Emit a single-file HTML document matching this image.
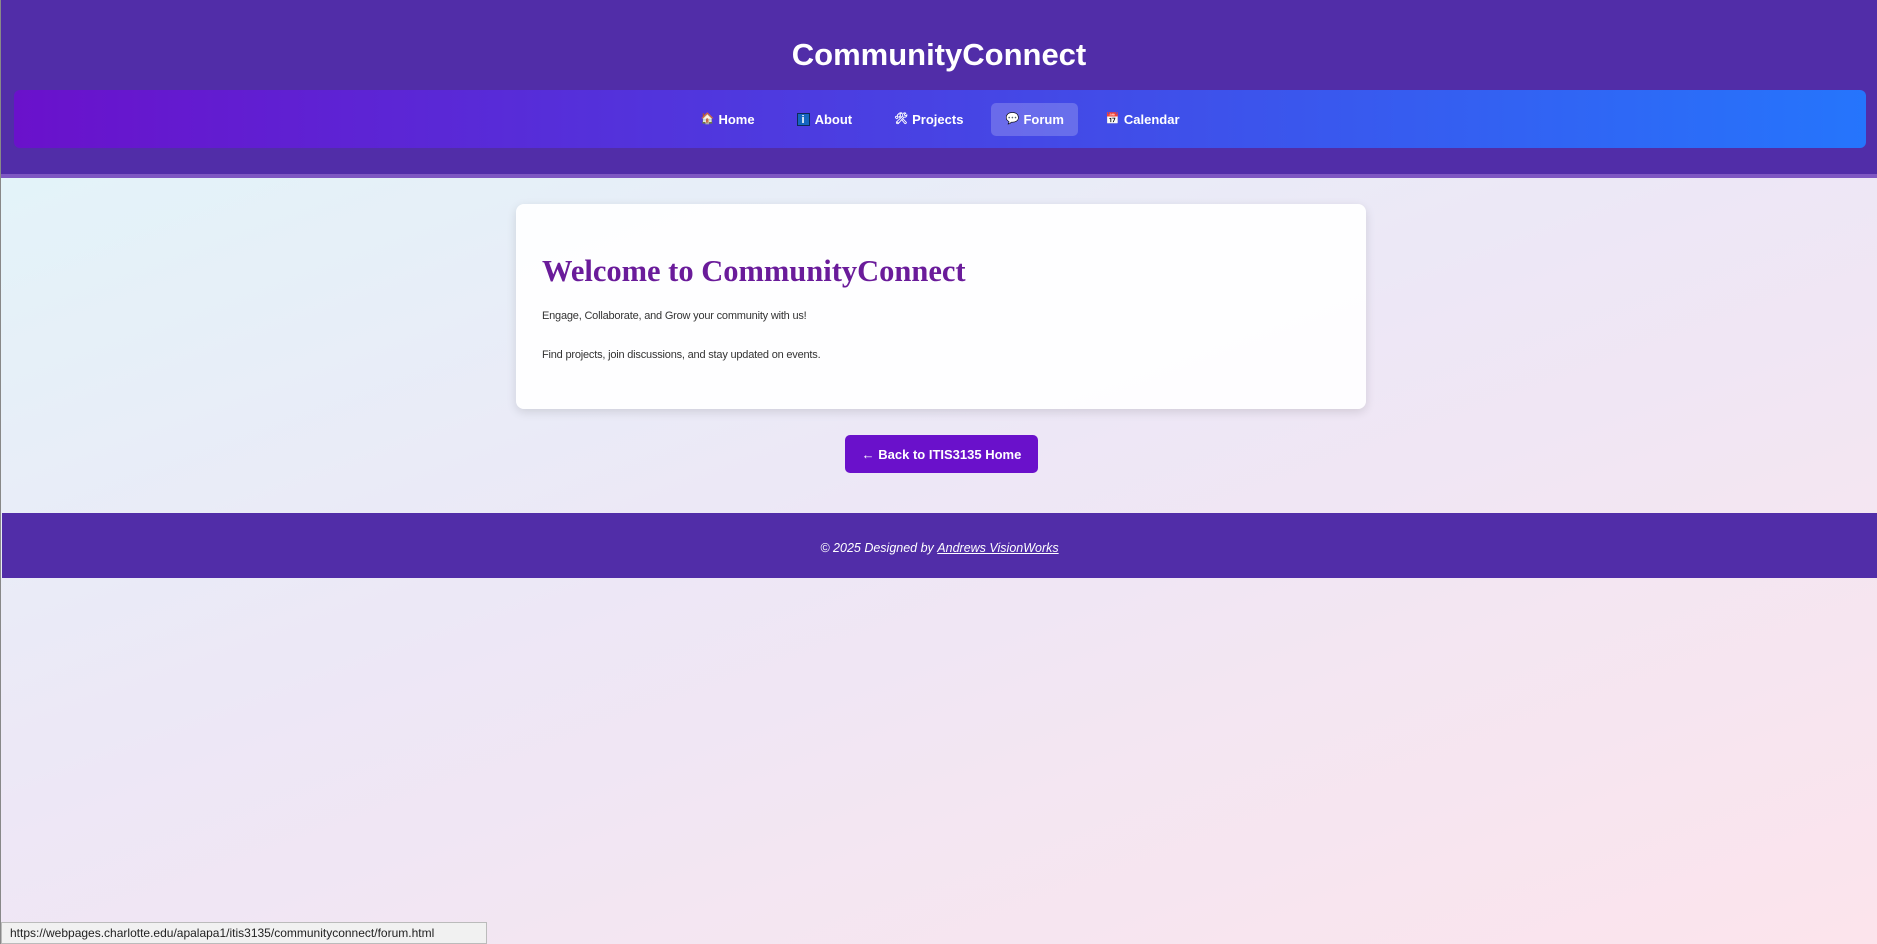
<!DOCTYPE html>
<html><head><meta charset="utf-8"><style>
*{margin:0;padding:0;box-sizing:border-box}
html,body{width:1877px;height:944px;overflow:hidden}
body{font-family:"Segoe UI","Liberation Sans","DejaVu Sans",sans-serif;background:linear-gradient(160deg,#e0f7fa 0%,#ede7f6 50%,#fce4ec 100%);position:relative;border-left:1px solid #888}
header{background:#512da8;height:178px;border-bottom:4px solid #7e57c2;position:relative}
h1{position:absolute;top:37px;left:0;right:0;text-align:center;color:#fff;font-size:31px;font-weight:bold}
nav{position:absolute;left:13px;right:11px;top:90px;height:58px;border-radius:6px;background:linear-gradient(90deg,#6a11cb,#2575fc);display:flex;justify-content:center;align-items:center;gap:0}
nav a{color:#fff;font-weight:bold;font-size:13px;text-decoration:none;padding:9px 14px;margin:0 7px;border-radius:5px;display:flex;align-items:center;gap:5px}
nav a.act{background:rgba(255,255,255,.2)}
.card{position:absolute;left:515px;top:204px;width:850px;height:205px;background:rgba(255,255,255,.92);border-radius:8px;box-shadow:0 3px 10px rgba(0,0,0,.12);padding:50px 26px}
.card h2{font-family:Georgia,"Liberation Serif",serif;color:#6a1b9a;font-size:30.5px;font-weight:bold;margin-bottom:21px}
.card p{font-size:11px;letter-spacing:-0.2px;color:#333;margin-bottom:27px}
.btn{position:absolute;left:844px;top:435px;width:193px;height:38px;background:#6a11cb;color:#fff;border-radius:5px;font-weight:bold;font-size:13px;display:flex;align-items:center;justify-content:center}
footer{position:absolute;left:1px;right:0;top:513px;height:65px;background:#512da8;color:#fff;font-style:italic;font-size:12.5px;display:flex;align-items:center;justify-content:center;padding-top:4px}
footer u{color:#fff}
.status{position:absolute;left:0;top:922px;width:486px;height:22px;background:#f1f1f1;border:1px solid #bbb;font-size:12px;color:#222;padding:3px 8px;font-family:"Liberation Sans",sans-serif}
.ic{display:inline-block;width:13px;height:13px;font-size:11px;line-height:13px;text-align:center}
</style></head><body>
<header><h1>CommunityConnect</h1>
<nav>
<a><span class="ic">🏠</span>Home</a>
<a><span class="ic" style="background:#1565c0;color:#fff;border:1px solid #0d2b5a">i</span>About</a>
<a><span class="ic">🛠</span>Projects</a>
<a class="act"><span class="ic">💬</span>Forum</a>
<a><span class="ic">📅</span>Calendar</a>
</nav></header>
<div class="card"><h2>Welcome to CommunityConnect</h2>
<p>Engage, Collaborate, and Grow your community with us!</p>
<p>Find projects, join discussions, and stay updated on events.</p></div>
<div class="btn">← Back to ITIS3135 Home</div>
<footer>© 2025 Designed by&nbsp;<u>Andrews VisionWorks</u></footer>
<div class="status">https://webpages.charlotte.edu/apalapa1/itis3135/communityconnect/forum.html</div>
</body></html>
